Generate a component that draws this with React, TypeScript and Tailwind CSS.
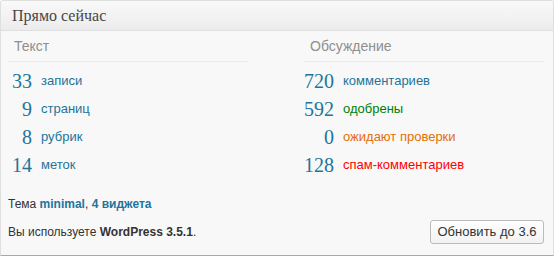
type Stat = {
  count: string
  label: string
  color: string
}

const content: Stat[] = [
  { count: '33', label: 'записи', color: 'text-[#21759b]' },
  { count: '9', label: 'страниц', color: 'text-[#21759b]' },
  { count: '8', label: 'рубрик', color: 'text-[#21759b]' },
  { count: '14', label: 'меток', color: 'text-[#21759b]' },
]

const discussion: Stat[] = [
  { count: '720', label: 'комментариев', color: 'text-[#21759b]' },
  { count: '592', label: 'одобрены', color: 'text-[#008000]' },
  { count: '0', label: 'ожидают проверки', color: 'text-[#e66f00]' },
  { count: '128', label: 'спам-комментариев', color: 'text-[#ff0000]' },
]

type ColumnProps = {
  title: string
  rows: Stat[]
  numWidth: string
}

function Column({ title, rows, numWidth }: ColumnProps) {
  return (
    <div className="w-[240px]">
      <div className="pl-[6px] pt-[5px] pb-[5px] leading-[20px] text-[14px] text-[#8f8f8f] border-b border-[#ececec]">
        {title}
      </div>
      <div className="mt-[5px]">
        {rows.map((row) => (
          <div key={row.label} className="flex h-[28px] items-center">
            <div
              className={`${numWidth} text-right text-[#21759b] text-[20px] leading-none`}
              style={{ fontFamily: '"Liberation Serif", Georgia, serif' }}
            >
              {row.count}
            </div>
            <a href="#" className={`pl-[9px] text-[13px] ${row.color}`}>
              {row.label}
            </a>
          </div>
        ))}
      </div>
    </div>
  )
}

export default function App() {
  return (
    <div
      className="w-[554px] h-[257px] bg-white"
      style={{ fontFamily: '"Liberation Sans", Arial, sans-serif' }}
    >
      <div className="h-[256px] flex flex-col border border-[#dfdfdf] border-b-[#a8a8a8] rounded-t-[3px] bg-[#f8f8f8] overflow-hidden">
        <div className="h-[30px] shrink-0 flex items-center px-[11px] border-b border-[#dfdfdf] bg-gradient-to-b from-[#f9f9f9] to-[#ececec]">
          <h3
            className="text-[16px] text-[#464646] leading-none"
            style={{ fontFamily: '"Liberation Serif", Georgia, serif' }}
          >
            Прямо сейчас
          </h3>
        </div>

        <div className="flex flex-col flex-1 px-[7px]">
          <div className="flex gap-[56px]">
            <Column title="Текст" rows={content} numWidth="w-[24px]" />
            <Column title="Обсуждение" rows={discussion} numWidth="w-[30px]" />
          </div>

          <p className="mt-[17px] text-[12px] leading-[16px] text-[#333]">
            Тема{' '}
            <a href="#" className="font-bold text-[#21759b]">
              minimal
            </a>
            ,{' '}
            <a href="#" className="font-bold text-[#21759b]">
              4 виджета
            </a>
          </p>

          <div className="mt-[8px] flex items-center justify-between pr-[2px]">
            <p className="text-[12px] leading-[16px] text-[#333]">
              Вы используете <span className="font-bold">WordPress 3.5.1</span>.
            </p>
            <button className="h-[24px] w-[114px] rounded-[3px] border border-[#bbb] bg-gradient-to-b from-white to-[#f2f2f2] text-[13px] text-[#333]">
              Обновить до 3.6
            </button>
          </div>
        </div>
      </div>
    </div>
  )
}
